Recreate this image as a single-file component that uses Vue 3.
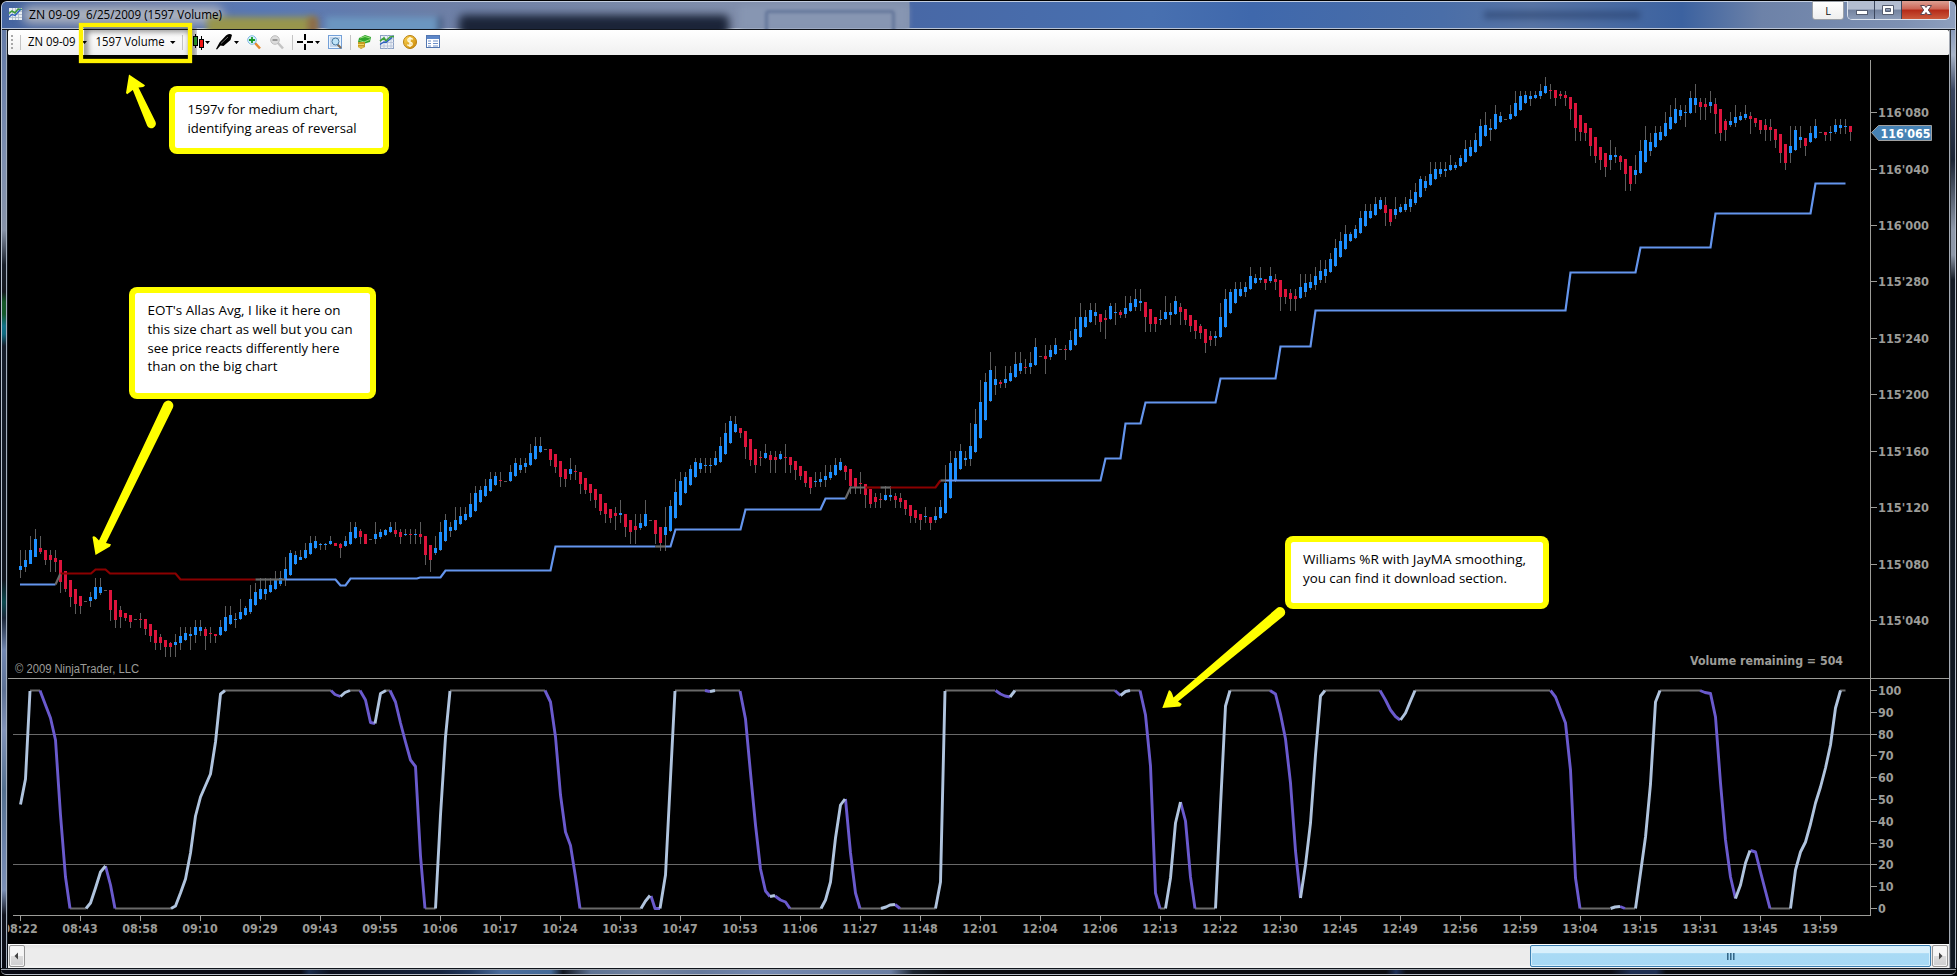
<script setup>
// Candle series: direction, high, low, body top, body bottom (thirds of a pixel below the block's base line)
const blocks = [
  { base: 270, rows: `u 840 925 888 900;u 840 906 870 893;u 798 884 840 882;u 777 863 807 861;d 798 853 834 846;d 840 885 840 870;d 840 906 855 870;d 840 906 864 876;d 870 969 870 936;d 903 966 903 957;d 930 1011 930 981;d 957 1032 957 1002;d 978 1032 978 1008;- 994;u 966 1011 981 993;u 924 990 951 987;u 924 975 951 969;- 961;d 960 1053 960 1020;d 990 1074 990 1050;d 1008 1074 1020 1041;d 1029 1053 1029 1044;d 1035 1074 1035 1056;- 1048;d 1029 1074 1047 1050;d 1047 1095 1047 1077;d 1062 1116 1062 1098;d 1080 1140 1080 1119;d 1092 1140 1101 1119;d 1110 1161 1110 1131;d 1116 1161 1119 1131;u 1092 1161 1116 1125;u 1071 1140 1098 1119;u 1071 1113 1089 1110;u 1071 1140 1092 1098;u 1050 1119 1071 1095;u 1050 1098 1071 1083;d 1071 1140 1077 1098;d 1071 1119 1089 1092;d 1092 1119 1092 1098;u 1050 1098 1071 1095;u 1008 1086 1041 1083;u 1008 1065 1035 1062;u 1029 1074 1047 1050;u 987 1050 1026 1047;u 1008 1038 1014 1035;u 945 1032 987 1026;u 939 1008 966 1005;u 924 990 957 987;u 924 990 957 972;u 924 969 945 966;u 903 960 930 957;u 903 948 924 942;u 861 948 897 930;u 840 918 849 915;u 843 885 855 882;u 840 870 861 870;u 819 867 840 864;u 798 855 819 852;u 798 837 813 834;u 819 840 822 825;u 819 840 822 825;u 798 825 813 822;d 819 828 819 828;d 819 864 822 834;u 798 831 813 828;u 756 825 786 822;u 756 807 771 804;d 777 822 783 801;d 792 822 792 822;- 808;u 756 822 792 807;u 777 807 786 801;u 777 798 780 795;u 756 789 771 786;d 756 801 780 792;d 777 822 786 801;u 777 798 792 795;d 777 822 792 795;u 777 822 792 795;d 756 822 792 801;d 798 885 798 855;d 825 906 825 870;u 798 855 834 849;u 756 843 786 840;u 732 816 750 813;u 756 801 771 783;u 711 783 750 780;u 711 765 738 762;u 711 753 732 750;u 669 744 702 741;u 648 726 669 723;u 648 699 660 696;u 627 681 648 678;u 606 666 627 663;u 606 648 618 645` },
  { base: 380, rows: `d 276 321 300 303;- 304;u 255 306 276 303;u 234 291 249 288;u 234 279 255 270;u 234 279 249 261;u 192 258 219 255;u 171 240 198 237;u 171 219 198 216;- 208;d 207 258 207 240;d 222 279 222 261;d 243 321 243 291;d 267 321 267 297;u 234 300 267 282;d 255 300 273 276;d 276 342 276 312;d 294 342 294 330;d 312 363 312 339;d 327 384 327 360;d 342 405 342 393;d 369 429 369 402;d 387 429 387 414;d 381 450 399 408;u 360 429 399 405;d 402 471 402 441;d 420 492 420 456;d 402 492 438 450;u 402 450 429 444;u 360 441 402 438;- 421;d 420 492 420 462;d 441 513 441 489;u 381 513 441 465;u 360 456 378 453;u 297 417 336 414;u 276 378 303 375;u 276 342 291 339;u 255 318 267 315;u 234 294 246 291;u 234 279 249 267;u 234 279 255 258;u 234 279 255 258;u 213 258 234 255;u 171 249 198 246;u 129 225 159 222;u 108 192 123 189;u 108 159 132 156;d 144 174 144 159;d 153 237 153 201;d 177 258 177 240;d 207 279 207 255;d 213 258 231 234;u 192 237 219 234;d 213 279 225 240;d 213 279 231 240;u 213 240 222 237;d 192 279 231 234;d 231 279 231 255;d 243 300 243 270;d 258 300 258 288;d 273 321 273 309;d 291 342 291 324;u 276 321 303 306;u 276 321 297 306;u 255 321 288 300;u 255 300 276 294;u 234 288 255 285;u 234 273 246 270;d 255 300 258 276;d 267 342 267 318;d 294 342 294 324;d 276 342 309 312;d 312 384 312 345;d 327 384 327 372;d 339 384 351 366;d 339 384 357 360;u 318 363 345 360;u 318 363 345 351;d 339 384 348 360;d 339 384 354 366;d 360 405 360 387;d 375 429 375 408;d 390 429 390 414;d 402 450 402 420;u 381 429 408 411;d 411 450 411 429;u 381 429 408 420;u 360 417 381 414;u 255 402 309 399;u 213 357 249 354;u 213 306 234 300;u 192 270 213 267;u 213 258 234 240;u 129 258 198 237;u 87 219 132 216` },
  { base: 220, rows: `u 480 657 546 654;u 459 603 486 600;u 396 546 450 543;u 438 525 477 495;d 480 504 486 492;u 438 504 477 489;u 438 486 459 483;u 396 474 432 471;u 396 462 429 453;d 417 462 441 444;u 396 462 429 441;u 354 438 381 435;- 409;d 375 462 408 417;u 375 420 390 411;u 354 405 375 402;- 388;d 375 420 387 390;u 333 393 360 390;u 291 378 327 375;u 249 354 291 351;u 270 324 291 321;u 249 309 270 306;u 249 315 276 288;d 282 336 282 306;d 270 357 294 300;u 249 300 258 297;u 249 315 276 279;d 270 294 276 285;u 228 294 264 282;u 228 276 249 273;u 207 273 237 261;u 207 273 243 249;d 246 336 246 291;d 267 336 267 312;d 291 336 291 312;u 270 315 297 300;u 228 300 276 297;u 249 315 276 285;u 228 285 243 282;d 249 315 261 276;d 267 315 267 300;d 285 336 285 318;d 300 357 300 333;d 312 357 318 339;d 327 399 327 369;d 333 378 348 360;u 333 378 348 354;u 249 354 291 351;u 207 324 237 321;u 207 282 216 279;u 186 252 207 249;u 186 231 207 228;u 186 231 201 216;u 141 210 168 207;u 162 192 174 189;u 141 189 174 180;d 177 210 177 189;u 141 189 168 183;d 162 210 177 186;d 180 273 180 231;d 207 252 207 231;d 207 273 219 237;d 207 273 228 237;u 162 237 201 234;u 162 231 189 216;u 162 210 186 204;u 141 210 168 195;u 120 189 153 180;u 120 189 147 168;u 99 159 117 156;u 57 141 84 138` },
  { base: 60, rows: `u 516 594 543 591;u 495 570 522 567;u 516 546 522 543;u 495 537 507 534;u 453 522 474 519;u 432 501 453 498;u 432 477 453 474;u 411 468 432 465;u 411 450 420 447;d 411 498 435 459;d 447 498 447 486;u 411 477 447 465;u 432 459 441 456;u 411 456 432 450;u 390 456 417 441;u 369 435 396 429;u 348 414 357 411;u 348 393 363 384;u 306 378 342 375;u 306 360 327 357;u 306 351 327 342;u 306 351 327 333;u 285 333 315 330;u 306 330 315 324;u 285 321 294 318;u 240 309 267 306;u 240 291 261 288;u 219 279 240 276;u 177 261 198 258;u 156 231 195 228;u 177 243 204 210;u 135 210 162 207;u 156 189 168 186;- 178;u 135 180 162 177;u 93 171 129 168;u 93 153 108 150;u 93 132 105 129;u 93 138 108 117;u 93 117 105 114;u 72 117 93 108;u 51 102 78 99;d 72 117 90 93;d 90 138 90 114;d 93 117 102 108;d 93 138 105 114;d 111 180 111 147;d 129 243 129 204;d 165 243 165 216;d 189 243 189 219;d 204 288 204 258;d 231 309 231 288;d 261 330 261 300;d 279 351 279 321;u 240 330 285 300;u 261 309 285 291;d 285 330 288 306;d 297 393 297 342;d 318 393 318 372;u 285 372 330 345;u 240 342 273 339;u 198 309 240 306;u 219 288 246 273;u 198 264 219 261;u 198 243 216 240;u 156 231 189 228;u 135 210 171 207;u 114 192 147 189;u 135 180 150 168;u 135 201 156 159;u 93 162 114 159;u 72 159 114 135;d 114 180 126 141;d 114 180 132 141;u 93 159 126 138;d 114 222 132 162;d 147 243 147 219;d 177 243 183 210;u 156 201 183 195;u 135 201 171 189;u 156 183 168 180;u 135 180 162 174;d 156 222 168 177;d 174 201 174 189;d 180 222 180 210;d 177 243 195 210;d 177 243 201 210;d 207 264 207 240;d 222 309 222 279;d 252 330 252 309;u 198 309 258 279;u 198 273 210 270;u 198 264 231 240;d 234 288 234 258;u 198 249 219 246;u 177 237 198 234;- 217;d 216 243 216 225;u 198 243 216 219;u 177 222 195 216;u 177 222 195 204;u 177 222 198 201;d 198 243 198 216` }
]

const candles = blocks
  .flatMap(b => b.rows.split(';').map(r => {
    const [dir, ...n] = r.split(' ')
    const y = n.map(v => b.base + Math.round((Number(v) - 0.6) / 3))
    return dir === '-'
      ? { cls: 'flat', hi: y[0], lo: y[0] + 1, top: y[0], bot: y[0] + 1 }
      : { cls: dir === 'u' ? 'up' : 'down', hi: y[0], lo: y[1], top: y[2], bot: Math.max(y[3], y[2] + 1) }
  }))
  .map((c, i) => ({ ...c, x: 20 + 5 * i }))

const average = [
  ['avg-up', '20,584.5 55.5,584.5'],
  ['avg-flat', '55.5,584.5 60.5,573.5'],
  ['avg-down', '60.5,573.5 91,573.5 95.5,569.5 105.5,569.5 110,573.5 175.5,573.5 180.5,579.5 255.5,579.5'],
  ['avg-flat', '255.5,579.5 285.5,579.5'],
  ['avg-up', '285.5,579.5 335.5,579.5 340.5,585.5 345.5,585.5 350.5,578.5 417,578.5 420,577.5 440.5,577.5 445.5,570.5 550.5,570.5 555.5,546.5 655.5,546.5'],
  ['avg-flat', '655.5,546.5 665.5,546.5'],
  ['avg-up', '665.5,546.5 670.5,546.5 675.5,529.5 740.5,529.5 745.5,509.5 820.5,509.5 825.5,498.5 845.5,498.5'],
  ['avg-flat', '845.5,498.5 850.5,487.5 865.5,487.5'],
  ['avg-down', '865.5,487.5 880.5,487.5'],
  ['avg-flat', '880.5,487.5 890.5,487.5'],
  ['avg-down', '890.5,487.5 935.5,487.5 940.5,480.5'],
  ['avg-flat', '940.5,480.5 945.5,480.5'],
  ['avg-up', '945.5,480.5 1100.5,480.5 1105.5,458.5 1120.5,458.5 1125.5,423.5 1140.5,423.5 1145.5,402.5 1215.5,402.5 1220.5,378.5 1275.5,378.5 1280.5,346.5 1310.5,346.5 1315.5,310.5 1565.5,310.5 1570.5,272.5 1635.5,272.5 1640.5,247.5 1710.5,247.5 1715.5,213.5 1810.5,213.5 1815.5,183.5 1845.5,183.5']
]

// Oscillator: runs at the 0 / 100 limits, then rising and falling stretches
const flats = [
  [30, 40, 1], [70, 86, 0], [115, 171, 0], [225, 331, 1], [350, 360, 1], [386, 390, 1], [425, 435.5, 0], [450, 545, 1],
  [580, 641, 0], [675, 705, 1], [715, 740, 1], [790, 821, 0], [860, 881, 0], [900, 935.5, 0], [945, 995, 1],
  [1015, 1115, 1], [1130, 1140, 1], [1160, 1165, 0], [1195, 1215, 0], [1230, 1270, 1], [1325, 1380, 1], [1415, 1550, 1],
  [1580, 1610, 0], [1625, 1635, 0], [1660, 1700, 1], [1770, 1790, 0], [1840, 1845.5, 1]
].map(([a, b, hi]) => ({ a, b, y: hi ? 690.5 : 908.5 }))
const rising = [
  '20.5,804.5 25.5,779 30,691', '86,908.5 90.5,903 95.5,888 100.5,872 105.5,866',
  '171,908.5 175.5,906 180.5,893 185.5,879 190.5,853 195.5,816 200.5,797 210.5,774 215.5,742 220.5,694 225,690.5',
  '340.5,696.5 345,692.5 350,690.5', '375,723.5 380.5,693.5 386,690.5', '435.5,908.5 440.5,815 445.5,737 450,691',
  '641,908.5 645.5,901 650,895.5', '660,908.5 665.5,875 670.5,778 675,691', '710,691.5 715,690.5', '770,896.5 775,895.5',
  '821,908.5 825.5,900 830.5,882 835.5,838 840.5,805 845,799', '881,908.5 886,907 890,905 895,904.5',
  '935.5,908.5 940.5,882 945,691', '1010,697 1015,690.5', '1120.5,695.5 1125.5,691.5 1130,690.5',
  '1165.5,908.5 1170.5,878 1175.5,823 1180.5,802', '1215.5,908.5 1220.5,806 1225.5,706 1230,690.5',
  '1300.5,898 1305.5,865 1310.5,823 1315.5,755 1320.5,696 1325,690.5', '1400.5,720 1405.5,713 1410.5,701 1415,690.5',
  '1610.5,908.5 1615,907 1620,906.5', '1635.5,908.5 1640.5,873 1645.5,837 1650.5,784 1655.5,702 1660,690.5',
  '1735.5,898.5 1740.5,885 1745.5,863 1750,850.5',
  '1790.5,908.5 1795.5,870 1800.5,852 1805.5,842 1810.5,824 1815.5,803 1820.5,787 1825.5,768 1830.5,745 1835.5,708 1840.5,690.5'
]
const falling = [
  '40,690.5 45.5,705 50.5,718 55.5,740 60.5,815 65.5,877 70,908.5', '105.5,866 110.5,885 115,908.5',
  '331,690.5 335,694.5 340.5,696.5', '360,690.5 365.5,700 370.5,722.5 375,723.5',
  '390,690.5 395.5,702 400.5,723 405.5,742 410.5,760 415.5,766.5 420.5,856 425,908.5',
  '545,690.5 550.5,702 555.5,737 560.5,795 565.5,832 570.5,845.5 575.5,877 580,908.5', '651,896 655,908.5 660,908.5',
  '705,690.5 710,691.5', '740,691 745.5,719 750.5,773 755.5,825 760.5,869 765.5,891 770,896.5',
  '775,896 780.5,900 785.5,902 790,908.5', '845.5,799 850.5,853 855.5,893 860,908.5', '895,904.5 900,908.5',
  '995.5,690.5 1000.5,694 1005,696 1010,697', '1115,690.5 1120.5,695.5', '1140,690.5 1145.5,715 1150.5,766 1155.5,893 1160,908.5',
  '1180.5,802 1185.5,821 1190.5,877 1195,908.5', '1270,690.5 1275.5,694 1280.5,714 1285.5,739 1290.5,783 1295.5,851 1300.5,898',
  '1380,690.5 1385.5,700 1390.5,710 1395.5,716.5 1400,720', '1550.5,690.5 1555.5,697 1560.5,710 1565.5,723 1570.5,770 1575.5,878 1580,908.5',
  '1620,906.5 1625,908.5', '1700,690.5 1705,692.5 1710.5,693.5 1715.5,717 1720.5,783 1725.5,840 1730.5,877 1735.5,898.5',
  '1750.5,850.5 1755.5,852 1760.5,872 1770,908.5'
]

const times = '08:22 08:43 08:58 09:10 09:29 09:43 09:55 10:06 10:17 10:24 10:33 10:47 10:53 11:06 11:27 11:48 12:01 12:04 12:06 12:13 12:22 12:30 12:45 12:49 12:56 12:59 13:04 13:15 13:31 13:45 13:59'
  .split(' ').map((t, i) => ({ t, x: 20 + 60 * i }))
const prices = ["116'080", "116'040", "116'000", "115'280", "115'240", "115'200", "115'160", "115'120", "115'080", "115'040"]
  .map((t, i) => ({ t, y: Math.floor(112.6 + 56.45 * i) + 0.5 }))
const levels = [100, 90, 80, 70, 60, 50, 40, 30, 20, 10, 0]
  .map((t, i) => ({ t, y: Math.floor(690.4 + 21.8 * i) + 0.5, w: String(t).length * 7.8 }))

const notes = [
  { x: 169, y: 86, w: 220, h: 68, tx: 187.5, lines: [['1597v for medium chart,', 114, 150.5], ['identifying areas of reversal', 133, 169]] },
  { x: 129, y: 287, w: 247, h: 112, tx: 147.5, lines: [["EOT's Allas Avg, I like it here on", 315.3, 193], ['this size chart as well but you can', 334.2, 205], ['see price reacts differently here', 352.5, 192], ['than on the big chart', 371.2, 130]] },
  { x: 1285, y: 536, w: 264, h: 73, tx: 1303, lines: [['Williams %R with JayMA smoothing,', 564, 223], ['you can find it download section.', 583, 204]] }
]
const arrows = [
  'M129 74.5L145 85.2Q144 87.6 138.5 87.4L155.4 121.5A4.6 4.6 0 0 1 147.2 125.7L132.8 90L127.2 94.2L126 93Z',
  'M95.5 555L92.5 537Q94 534.5 99 540.5L163.5 403.5A5 5 0 0 1 172.8 408L106 543L111 544.3L110 546.4Z',
  'M1162.3 708L1168.8 690.4Q1171 689.5 1173.5 697.5L1276.5 608.5A5 5 0 0 1 1283.6 616L1178 701.5L1181.8 704L1180 706.4Z'
]
</script>

<template>
  <div class="window">
    <header class="titlebar">
      <div class="glass">
        <i class="b glow"></i><i class="b olive"></i><i class="b orange"></i><i class="b sky"></i><i class="b dark"></i>
        <i class="b pale"></i><i class="b box"></i><i class="b ghost"></i>
      </div>
      <svg class="caption" width="240" height="26" viewBox="0 0 240 26">
        <g transform="translate(9 8)">
          <rect width="13" height="12" fill="#e8edf2" />
          <path d="M0 3.5H13M0 6.5H13M0 9.5H13M3.5 0V12M6.5 0V12M9.5 0V12" stroke="#a9b6c6" stroke-width=".8" />
          <path d="M0 5.500L3 3L6 5L9 1L13 1.500" fill="none" stroke="#3f9a3a" stroke-width="1.6" />
          <path d="M0 9L3 6.5L6 7.5L12 1" fill="none" stroke="#2c5fc0" stroke-width="1.3" />
        </g>
        <text x="29" y="19" textLength="51" lengthAdjust="spacingAndGlyphs">ZN 09-09</text>
        <text x="86" y="19" textLength="136" lengthAdjust="spacingAndGlyphs">6/25/2009 (1597 Volume)</text>
      </svg>
      <div class="controls">
        <button class="lang">L</button>
        <div class="caps">
          <button class="cap"><svg width="27" height="18"><rect x="8.5" y="9.5" width="11" height="4" fill="#fff" stroke="#555d70" /></svg></button>
          <button class="cap"><svg width="27" height="18"><path d="M7.5 4.5h11v9h-11zM10.5 7.5v3h5v-3z" fill="#fff" fill-rule="evenodd" stroke="#555d70" /></svg></button>
          <button class="cap close"><svg width="47" height="18"><path d="M18.5 4.5h4l1.5 2l1.5-2h4l-3.2 4.5l3.2 4.5h-4l-1.5-2l-1.5 2h-4l3.2-4.5z" fill="#fff" stroke="#5b4650" /></svg></button>
        </div>
      </div>
    </header>

    <div class="body">
      <div class="edge left"></div>
      <main>
        <svg class="toolbar" width="1941" height="25" viewBox="8 30 1941 25">
          <defs>
            <linearGradient id="tb" x2="0" y2="1"><stop stop-color="#fff" /><stop offset="1" stop-color="#f0f0f0" /></linearGradient>
            <linearGradient id="gold" x2="1" y2="1"><stop stop-color="#ffd858" /><stop offset="1" stop-color="#c88400" /></linearGradient>
          </defs>
          <rect x="8" y="30" width="1941" height="25" rx="1.5" fill="url(#tb)" />
          <path d="M12 35v14" stroke="#a8a8a8" stroke-width="2" stroke-dasharray="2 2" />
          <path d="M20.5 35v15M182.5 35v15M292.5 35v15M350.5 35v15" stroke="#c4c4c4" />
          <text x="28" y="46" textLength="47.5" lengthAdjust="spacingAndGlyphs">ZN 09-09</text>
          <text x="95.5" y="46" textLength="69" lengthAdjust="spacingAndGlyphs">1597 Volume</text>
          <path d="M82 41h5l-2.5 3zM170 41h5.5l-2.7 3zM205 41h5l-2.5 3zM234 41h5l-2.5 3zM315 41h5l-2.5 3z" />
          <path d="M195.5 34v14M201.5 36v14" stroke="#000" />
          <rect x="193.5" y="36.5" width="4" height="9" fill="#35b435" stroke="#000" />
          <rect x="199.5" y="39.500" width="4" height="8" fill="#f01515" stroke="#000" />
          <g transform="translate(216 34)">
            <path d="M0 15L3.500 8.500L10 1.500Q14-1 16 1L14.500 6L7.500 12L4.500 11.500L1 15.500Z" />
            <path d="M5 9.500L12 3" stroke="#8a8a8a" stroke-width=".8" />
          </g>
          <g transform="translate(247 35)">
            <path d="M8 8L13 13.500" stroke="#e58a32" stroke-width="2.600" />
            <circle cx="5" cy="5" r="4.300" fill="#d8f0fb" stroke="#7fbce4" />
            <path d="M5 2v6M2 5h6" stroke="#169a28" stroke-width="1.800" />
          </g>
          <g transform="translate(270 35)">
            <path d="M8 8L13 13.500" stroke="#c4c4c4" stroke-width="2.600" />
            <circle cx="5" cy="5" r="4.300" fill="#dcdcdc" stroke="#bdbdbd" />
            <path d="M2.500 5h5" stroke="#999" stroke-width="2" />
          </g>
          <path d="M305 34v6M305 44v6M297 42h6M307 42h6" stroke="#000" stroke-width="2" />
          <g transform="translate(328 35)">
            <rect x=".5" y=".5" width="13" height="13" fill="#eaf4fd" stroke="#74a0d8" />
            <path d="M2 3h10M2 5h2M2 7h2M2 9h2M2 11h10" stroke="#9fb9da" />
            <path d="M9.500 9.500L13 13" stroke="#7d6a55" stroke-width="2" />
            <circle cx="7.500" cy="6.500" r="3.500" fill="#bfe3f8" stroke="#48789f" />
          </g>
          <g transform="translate(357 35)">
            <path d="M2 3L8 0L14 2L13 7L6 9L1 7Z" fill="#2fa52c" />
            <path d="M3 3L8 1.500L13 3M2.500 5.500L7 7L13 4.500" fill="none" stroke="#9adf7c" />
            <path d="M1 7H8V12L4 14L1 12Z" fill="#c49a22" />
            <path d="M1 9.500h6M1.500 12h5" stroke="#f4d863" />
          </g>
          <g transform="translate(380 35)">
            <rect x=".5" y=".5" width="13" height="13" fill="#edf1f7" stroke="#8aa0c4" />
            <path d="M0 4H14M0 7.500H14M0 11H14M4 0V14M7.500 0V14M11 0V14" stroke="#b1bfd4" stroke-width=".8" />
            <path d="M0 6L4 3L6 6L10 2L14 1.500" fill="none" stroke="#3fa23a" stroke-width="1.600" />
            <path d="M0 9.500L4 7L6 7.500L12 2.500" fill="none" stroke="#2c5fc0" stroke-width="1.300" />
          </g>
          <circle cx="410" cy="42" r="6.500" fill="url(#gold)" stroke="#b88011" />
          <path d="M412.700 39.300Q410 37.300 408.200 39Q407 41 410 42Q413 43 411.800 45Q410 46.700 407.300 44.700M410 37v10" fill="none" stroke="#fff8d8" stroke-width="1.500" />
          <g transform="translate(426 35)">
            <rect x=".5" y=".5" width="13" height="12" fill="#fff" stroke="#5276b0" />
            <rect x="1" y="1" width="12" height="3" fill="#5c86c8" />
            <path d="M2 6h3M7 6h5M2 8.500h3M7 8.500h5M2 11h3M7 11h5" stroke="#6e90c8" stroke-width="1.200" />
          </g>
        </svg>

        <svg class="chart" width="1941" height="889" viewBox="8 55 1941 889">
          <g shape-rendering="crispEdges">
            <template v-for="c in candles" :key="c.x">
              <rect class="wick" :x="c.x" :y="c.hi" width="1" :height="c.lo - c.hi" />
              <rect :class="c.cls" :x="c.x - 1" :y="c.top" width="3" :height="c.bot - c.top" />
            </template>
          </g>
          <polyline v-for="(l, i) in average" :key="'a' + i" :class="['avg', l[0]]" :points="l[1]" />

          <path class="level" d="M13 734.5H1870M13 864.5H1870" />
          <path v-for="(f, i) in flats" :key="'f' + i" class="limit" :d="`M${f.a} ${f.y}H${f.b}`" />
          <polyline v-for="(p, i) in falling" :key="'d' + i" class="osc fall" :points="p" />
          <polyline v-for="(p, i) in rising" :key="'u' + i" class="osc rise" :points="p" />

          <path class="axis" d="M8 678.5H1949M13 915.5H1871M1870.5 60V916" />
          <g v-for="t in times" :key="t.t">
            <path class="axis" :d="`M${t.x + 0.5} 916v5`" />
            <text class="tick" :x="t.x - 17.700" y="933" textLength="35.5" lengthAdjust="spacingAndGlyphs">{{ t.t }}</text>
          </g>
          <g v-for="p in prices" :key="p.t">
            <path class="axis" :d="`M1871 ${p.y}h6`" />
            <text class="tick" x="1878" :y="p.y + 4.500" textLength="51" lengthAdjust="spacingAndGlyphs">{{ p.t }}</text>
          </g>
          <g v-for="p in levels" :key="p.t">
            <path class="axis" :d="`M1871 ${p.y}h6`" />
            <text class="tick" x="1878" :y="p.y + 4.500" :textLength="p.w" lengthAdjust="spacingAndGlyphs">{{ p.t }}</text>
          </g>
          <path d="M1871.500 132.500L1878.500 125.500H1931.500V140.500H1878.500Z" fill="#4682b4" stroke="#a0a0a0" />
          <text class="tick last" x="1880.500" y="137.500" textLength="50" lengthAdjust="spacingAndGlyphs">116'065</text>
          <text class="tick" x="1690" y="665" textLength="153" lengthAdjust="spacingAndGlyphs">Volume remaining = 504</text>
          <text class="copy" x="15" y="673" textLength="124" lengthAdjust="spacingAndGlyphs">© 2009 NinjaTrader, LLC</text>
        </svg>

        <div class="scroll">
          <button class="arrow"><svg width="14" height="20"><path d="M8 6.500v7l-3.500-3.500z" fill="#444" /></svg></button>
          <div class="thumb"><i></i><i></i><i></i></div>
          <button class="arrow"><svg width="14" height="20"><path d="M6 6.500v7l3.500-3.500z" fill="#444" /></svg></button>
        </div>
      </main>
      <div class="edge right"></div>
    </div>
    <footer class="bottom"></footer>

    <svg class="overlay" width="1957" height="976">
      <defs>
        <filter id="soft" x="-20%" y="-30%" width="140%" height="160%"><feGaussianBlur stdDeviation="3" /></filter>
        <clipPath id="inner"><path d="M84 28H197V55H84Z" /></clipPath>
      </defs>
      <g clip-path="url(#inner)"><rect x="84.500" y="28.500" width="108" height="35" fill="none" stroke="#000" stroke-opacity=".6" stroke-width="5" filter="url(#soft)" /></g>
      <rect x="81" y="25" width="109" height="36" fill="none" stroke="#fff200" stroke-width="4.300" />
      <path v-for="(a, i) in arrows" :key="i" :d="a" fill="#ff0" />
      <g v-for="n in notes" :key="n.x">
        <rect :x="n.x" :y="n.y" :width="n.w" :height="n.h" rx="8" fill="#ff0" />
        <rect :x="n.x + 6" :y="n.y + 6" :width="n.w - 12" :height="n.h - 12" rx="2.500" fill="#fff" />
        <text v-for="l in n.lines" :key="l[0]" :x="n.tx" :y="l[1]" :textLength="l[2]" lengthAdjust="spacingAndGlyphs">{{ l[0] }}</text>
      </g>
    </svg>
  </div>
</template>

<style>
html, body { background: #000; overflow: hidden; }
</style>

<style scoped>
.window { position: relative; width: 1957px; height: 976px; background: #000; overflow: hidden; display: flex; flex-direction: column; font-family: "Open Sans", "Noto Sans", sans-serif; }
svg { display: block; }
i { display: block; }
button { border: 0; padding: 0; margin: 0; }
.titlebar { box-sizing: border-box; position: relative; flex: none; height: 29px; margin: 1px 1px 0; border: 1px solid #c3cee0; border-bottom: 0; border-radius: 6px 6px 0 0; display: flex; justify-content: space-between; background: #3d5e9c; }
.glass { position: absolute; inset: 0; overflow: hidden; border-radius: 5px 5px 0 0; border-bottom: 1px solid #11151c; box-shadow: inset 0 -1px #b9c4d6; background: linear-gradient(90deg, #4464a0 0, #6072a0 120px, #5878b4 260px, #6d7fa6 440px, #7888a8 600px, #8492ae 800px, #8090ad 907px, #4868a6 908px, #4870b0 1150px, #3f68ac 1250px, #4a6ea8 1440px, #5774a4 1530px, #3c62a0 1680px, #6d82a8 1760px, #7d90b2 1900px, #8fa0be 1957px); }
.b { position: absolute; filter: blur(3px); }
.glow { left: 20px; top: 4px; width: 202px; height: 18px; background: #a9b0be; border-radius: 9px; filter: blur(5px); }
.olive { left: 205px; top: 15px; width: 108px; height: 20px; background: #98964c; }
.orange { left: 306px; top: 15px; width: 10px; height: 20px; background: #8d6a48; }
.sky { left: 324px; top: 15px; width: 112px; height: 20px; background: #6b96c0; border-right: 4px solid #415578; }
.dark { left: 457px; top: 13px; width: 270px; height: 24px; background: #1b2438; border-radius: 5px; filter: blur(4px); }
.pale { left: 738px; top: 3px; width: 168px; height: 24px; background: #8796b2; }
.box { left: 763px; top: 8px; width: 124px; height: 24px; border: 3px solid #64769a; border-radius: 4px; filter: blur(1.5px); }
.ghost { left: 1482px; top: 9px; width: 156px; height: 8px; background: #263d68; opacity: .55; }
.caption { position: relative; margin: -2px 0 0 -2px; font-size: 12.5px; }
.controls { position: relative; display: flex; align-items: flex-start; gap: 3px; margin-right: 5px; margin-top: -1px; }
.lang { box-sizing: border-box; width: 32px; height: 19px; background: linear-gradient(#fff, #eee); border: 1px solid #9aa0a8; border-radius: 0 0 3px 3px; font: 11px/17px "Open Sans", sans-serif; color: #111; }
.caps { display: flex; border: 1px solid #dce3ee; border-top: 0; border-radius: 0 0 5px 5px; overflow: hidden; }
.cap { width: 27px; height: 18px; background: linear-gradient(#b3bdd0 45%, #74839f 50%, #8c9cb8); border-right: 1px solid #3b465c; box-sizing: border-box; }
.close { width: 47px; border-right: 0; background: linear-gradient(#dda093, #cc6454 45%, #b42a18 50%, #cb5a3c); }
.body { display: flex; flex: none; height: 938px; }
main { width: 1941px; flex: none; display: flex; flex-direction: column; background: #000; }
.edge { box-sizing: border-box; width: 8px; flex: none; }
.left { border-left: 1px solid #080c14; box-shadow: inset 1px 0 #b8c2d0, inset -1px 0 #10151c, inset -2px 0 #a4aebc; background: linear-gradient(#647ba8 0, #7d8fb0 130px, #8793a8 200px, #181f2a 235px, #14181e 262px, #145728 272px, #13582c 284px, #127088 296px, #0f6a80 304px, #151d2a 316px, #10151e 550px, #0c4a50 572px, #1a2638 588px, #7288b2 620px, #5d7194 660px, #8294ba 700px, #54708f 760px, #6d84ac 820px, #7b90b6 860px, #10131d 885px, #080a12); }
.right { border-right: 1px solid #101216; box-shadow: inset -1px 0 #b4bcc8, inset 1px 0 #a4aab4, inset 2px 0 #30363e; background: linear-gradient(#8a9cbc 0, #a8b4c8 25px, #3a4660 60px, #1b2434 130px, #8f99aa 200px, #8e98a8 225px, #131a24 250px, #111822); }
.bottom { box-sizing: border-box; flex: none; height: 7px; margin: 0 1px 1px; border-top: 1px solid #10151c; border-bottom: 1px solid #b4bac4; border-radius: 0 0 5px 5px; box-shadow: inset 0 1px #a0a6ae; background: linear-gradient(90deg, #090a14 300px, #1a2c4c 308px, #0c0f1c 330px, #15233f 440px, #233a60 470px, #4c6d9c 500px, #456a98 550px, #10141e 562px, #5f7394 590px, #71829f 640px, #66799c 700px, #7488b0 760px, #6b7ea2 890px, #1b2430 912px, #0a0b10 950px, #0a0b10 1385px, #1c2f58 1395px, #0b0d14 1405px, #0a0b12 1610px, #1d2e52 1630px, #1d2e52 1655px, #080a0e 1665px); }
.toolbar { font-size: 12.5px; flex: none; }
.chart { flex: none; }
.wick, .flat { fill: #5c5c5c; }
.up { fill: #1e90ff; }
.down { fill: #dc143c; }
.avg { fill: none; stroke-width: 2.2; }
.avg-up { stroke: #6495ed; }
.avg-flat { stroke: #696969; }
.avg-down { stroke: #8b0000; }
.level { stroke: #696969; fill: none; shape-rendering: crispEdges; }
.limit { stroke: #696969; stroke-width: 2; }
.osc { fill: none; stroke-width: 2.9; stroke-linejoin: round; }
.rise { stroke: #b0c4de; }
.fall { stroke: #6a5acd; }
.axis { stroke: #9c9c98; fill: none; shape-rendering: crispEdges; }
.tick { font: bold 12px "DejaVu Sans", sans-serif; fill: #9c9c98; }
.tick.last { fill: #fff; }
.copy { font: 12px "Liberation Sans", sans-serif; fill: #9c9c98; }
.scroll { box-sizing: border-box; flex: none; height: 24px; display: flex; align-items: center; padding: 0 1px; background: linear-gradient(#fff 1px, #e2e2e2 1px, #ececec 5px, #ececec 20px, #f4f4f4); }
.arrow { box-sizing: border-box; width: 16px; height: 22px; border: 1px solid #969696; border-radius: 2px; background: linear-gradient(#f6f6f6 48%, #dcdcdc 52%, #cfcfd1); box-shadow: inset 0 0 0 1px #f4f4f4; }
.thumb { box-sizing: border-box; width: 401px; height: 22px; margin-left: auto; margin-right: 1px; border: 1px solid #3c7fb1; border-radius: 2px; box-shadow: inset 0 0 0 1px #d4effc; background: linear-gradient(#d9f0fc 35%, #a9daf5 38%, #a7d9f5); display: flex; align-items: center; justify-content: center; gap: 1px; }
.thumb i { width: 2px; height: 7px; background: linear-gradient(90deg, #1f4c6c, #7db5d5); }
.overlay { position: absolute; inset: 0; font-size: 13.5px; pointer-events: none; }
</style>
